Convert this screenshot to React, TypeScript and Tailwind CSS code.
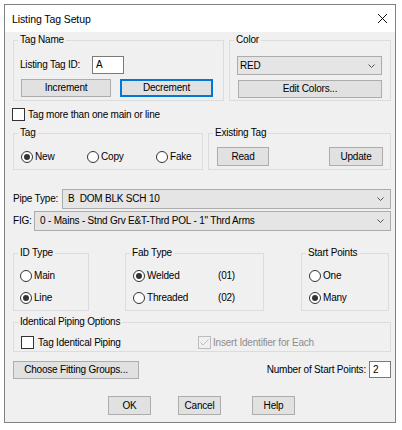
import React from "react";

function Group({
  label,
  className,
  children,
}: {
  label: string;
  className: string;
  children: React.ReactNode;
}) {
  return (
    <fieldset className={"border border-[#dcdcdc] min-w-0 " + className}>
      <legend className="ml-[4px] px-[2px] leading-[12px]">{label}</legend>
      {children}
    </fieldset>
  );
}

function Btn({
  children,
  className,
  focused,
}: {
  children: React.ReactNode;
  className: string;
  focused?: boolean;
}) {
  return (
    <div
      className={
        "flex items-center justify-center bg-[#e1e1e1] border " +
        (focused
          ? "border-[#0078d7] shadow-[inset_0_0_0_1px_#0078d7] "
          : "border-[#adadad] ") +
        className
      }
    >
      {children}
    </div>
  );
}

function Radio({ checked }: { checked?: boolean }) {
  return (
    <span className="w-[12px] h-[12px] rounded-full border border-[#333333] bg-white flex items-center justify-center shrink-0">
      {checked && <span className="w-[6px] h-[6px] rounded-full bg-[#333333]" />}
    </span>
  );
}

function Check({ disabled, checked }: { disabled?: boolean; checked?: boolean }) {
  return (
    <span
      className={
        "w-[13px] h-[13px] border flex items-center justify-center shrink-0 " +
        (disabled ? "border-[#bcbcbc] bg-[#f0f0f0]" : "border-[#333333] bg-white")
      }
    >
      {checked && (
        <svg width="9" height="7" viewBox="0 0 9 7">
          <polyline
            points="0.5,3.5 3,6 8.5,0.5"
            fill="none"
            stroke={disabled ? "#bcbcbc" : "#333333"}
            strokeWidth="1"
          />
        </svg>
      )}
    </span>
  );
}

function Chevron() {
  return (
    <svg width="7" height="4" viewBox="0 0 7 4" className="shrink-0">
      <polyline points="0.5,0.5 3.5,3.5 6.5,0.5" fill="none" stroke="#555555" strokeWidth="1" />
    </svg>
  );
}

function Select({ value, className }: { value: string; className: string }) {
  return (
    <div
      className={
        "flex items-center bg-[#e5e5e5] border border-[#acacac] pr-[6px] " + className
      }
    >
      <span className="flex-1 whitespace-pre">{value}</span>
      <Chevron />
    </div>
  );
}

export default function App() {
  return (
    <div className="w-[402px] h-[430px] bg-white pt-[4px] pl-[4px] font-['Liberation_Sans',Arial,sans-serif] text-[10px] tracking-[-0.2px] text-black leading-[12px]">
      <div className="w-[392px] h-[419px] border border-[#818181] flex flex-col">
        <div className="h-[27px] shrink-0 bg-white flex items-center pl-[7px] pr-[8px]">
          <span className="text-[10.5px] tracking-[-0.1px]">Listing Tag Setup</span>
          <svg width="9" height="9" viewBox="0 0 9 9" className="ml-auto">
            <line x1="0" y1="0" x2="9" y2="9" stroke="#111111" strokeWidth="1" />
            <line x1="9" y1="0" x2="0" y2="9" stroke="#111111" strokeWidth="1" />
          </svg>
        </div>

        <div className="flex-1 bg-[#f0f0f0] pl-[8px] pr-[4px] flex flex-col">
          {/* Row 1 */}
          <div className="mt-[2px] flex gap-[5px]">
            <Group label="Tag Name" className="w-[211px]">
              <div className="pl-[6px] pt-[10px] pb-[3px]">
                <div className="flex items-center">
                  <span className="w-[72px]">Listing Tag ID:</span>
                  <div className="w-[32px] h-[18px] bg-white border border-[#7a7a7a] pl-[3px] flex items-center">
                    A
                  </div>
                </div>
                <div className="mt-[5px] flex">
                  <Btn className="ml-[1px] w-[90px] h-[18px]">Increment</Btn>
                  <Btn focused className="ml-[9px] w-[93px] h-[18px]">
                    Decrement
                  </Btn>
                </div>
              </div>
            </Group>
            <Group label="Color" className="w-[162px]">
              <div className="pl-[7px] pt-[10px] pb-[2px]">
                <Select value="RED" className="w-[145px] h-[19px] pl-[2px]" />
                <Btn className="mt-[5px] ml-[1px] w-[144px] h-[18px]">Edit Colors...</Btn>
              </div>
            </Group>
          </div>

          {/* Row 2 */}
          <div className="mt-[7px] -ml-[1px] flex items-center gap-[3px]">
            <Check />
            <span>Tag more than one main or line</span>
          </div>

          {/* Row 3 */}
          <div className="mt-[6px] flex gap-[5px]">
            <Group label="Tag" className="w-[190px]">
              <div className="pl-[7px] pt-[12px] pb-[5px] flex items-center">
                <div className="w-[66px] flex items-center gap-[2px]">
                  <Radio checked />
                  <span>New</span>
                </div>
                <div className="w-[69px] flex items-center gap-[2px]">
                  <Radio />
                  <span>Copy</span>
                </div>
                <div className="flex items-center gap-[2px]">
                  <Radio />
                  <span>Fake</span>
                </div>
              </div>
            </Group>
            <Group label="Existing Tag" className="w-[183px]">
              <div className="pl-[8px] pr-[7px] pt-[8px] pb-[3px] flex justify-between">
                <Btn className="w-[52px] h-[19px]">Read</Btn>
                <Btn className="w-[54px] h-[19px]">Update</Btn>
              </div>
            </Group>
          </div>

          {/* Row 4 */}
          <div className="mt-[19px] flex items-center">
            <span className="w-[49px]">Pipe Type:</span>
            <Select value="B  DOM BLK SCH 10" className="flex-1 h-[20px] pl-[5px]" />
          </div>
          <div className="mt-[2px] flex items-center">
            <span className="w-[21px]">FIG:</span>
            <Select
              value={'0 - Mains - Stnd Grv E&T-Thrd POL - 1" Thrd Arms'}
              className="flex-1 h-[20px] pl-[5px]"
            />
          </div>

          {/* Row 5 */}
          <div className="mt-[16px] flex">
            <Group label="ID Type" className="w-[76px]">
              <div className="pl-[6px] pt-[11px] pb-[6px] flex flex-col gap-[10px]">
                <div className="flex items-center gap-[2px]">
                  <Radio />
                  <span>Main</span>
                </div>
                <div className="flex items-center gap-[2px]">
                  <Radio checked />
                  <span>Line</span>
                </div>
              </div>
            </Group>
            <Group label="Fab Type" className="ml-[36px] w-[139px]">
              <div className="pl-[7px] pt-[11px] pb-[6px] flex flex-col gap-[10px]">
                <div className="flex items-center gap-[2px]">
                  <Radio checked />
                  <span className="w-[69px]">Welded</span>
                  <span>(01)</span>
                </div>
                <div className="flex items-center gap-[2px]">
                  <Radio />
                  <span className="w-[69px]">Threaded</span>
                  <span>(02)</span>
                </div>
              </div>
            </Group>
            <Group label="Start Points" className="ml-[37px] w-[88px]">
              <div className="pl-[7px] pt-[11px] pb-[6px] flex flex-col gap-[10px]">
                <div className="flex items-center gap-[2px]">
                  <Radio />
                  <span>One</span>
                </div>
                <div className="flex items-center gap-[2px]">
                  <Radio checked />
                  <span>Many</span>
                </div>
              </div>
            </Group>
          </div>

          {/* Row 6 */}
          <div className="mt-[5px]">
            <Group label="Identical Piping Options" className="w-full">
              <div className="pl-[7px] pt-[8px] pb-[2px] flex items-center">
                <div className="w-[177px] flex items-center gap-[4px]">
                  <Check />
                  <span>Tag Identical Piping</span>
                </div>
                <div className="flex items-center gap-[2px] text-[#8d8d8d]">
                  <Check disabled checked />
                  <span>Insert Identifier for Each</span>
                </div>
              </div>
            </Group>
          </div>

          {/* Row 7 */}
          <div className="mt-[9px] flex items-start">
            <Btn className="w-[126px] h-[18px]">Choose Fitting Groups...</Btn>
            <div className="ml-auto flex items-center gap-[3px]">
              <span>Number of Start Points:</span>
              <div className="w-[22px] h-[17px] bg-white border border-[#7a7a7a] pl-[3px] flex items-center">
                2
              </div>
            </div>
          </div>

          {/* Row 8 */}
          <div className="mt-[17px] flex">
            <Btn className="ml-[95px] w-[43px] h-[19px]">OK</Btn>
            <Btn className="ml-[27px] w-[43px] h-[19px]">Cancel</Btn>
            <Btn className="ml-[31px] w-[43px] h-[19px]">Help</Btn>
          </div>
        </div>
      </div>
    </div>
  );
}
